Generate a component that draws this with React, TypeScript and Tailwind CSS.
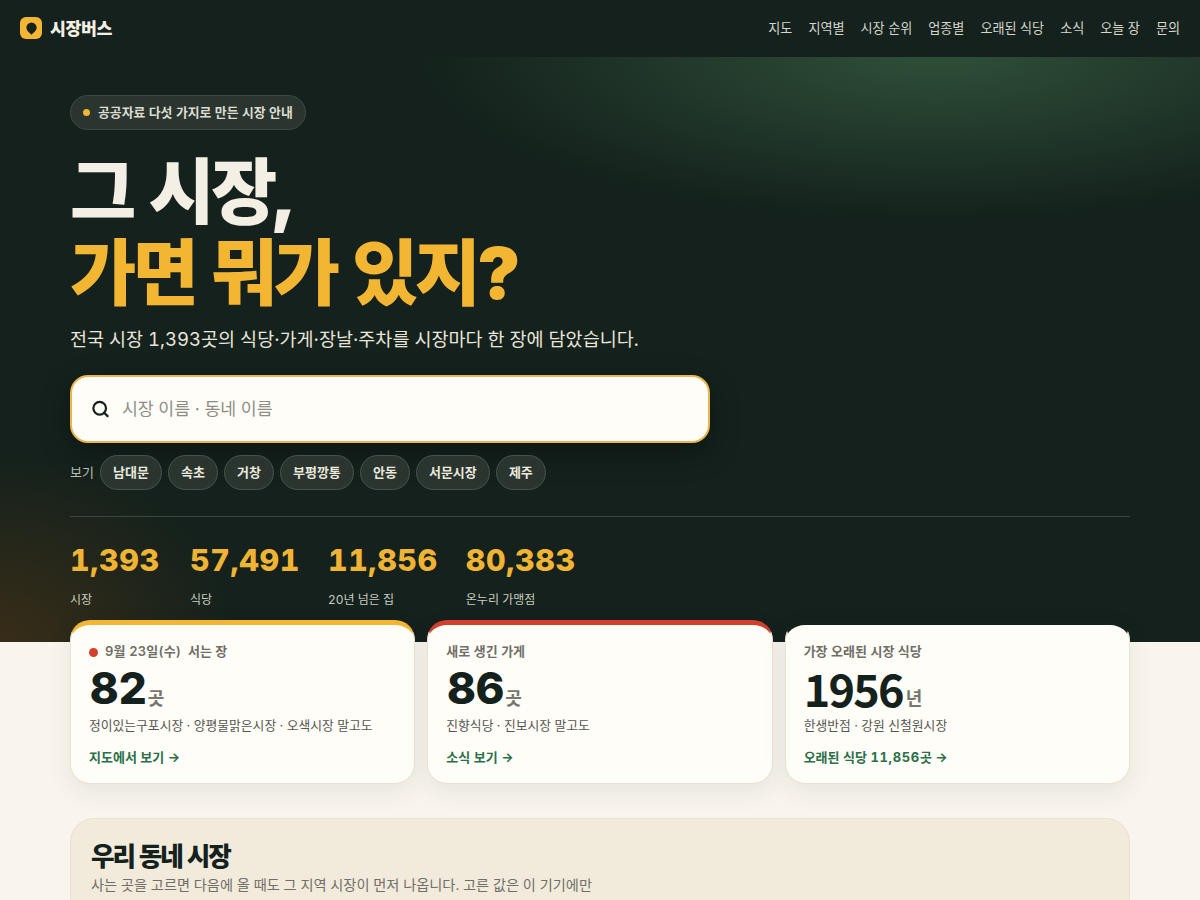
import React from 'react';
import { Search } from 'lucide-react';

const NAV = ['지도', '지역별', '시장 순위', '업종별', '오래된 식당', '소식', '오늘 장', '문의'];
const CHIPS = ['남대문', '속초', '거창', '부평깡통', '안동', '서문시장', '제주'];
const STATS = [
  { value: '1,393', label: '시장' },
  { value: '57,491', label: '식당' },
  { value: '11,856', label: '20년 넘은 집' },
  { value: '80,383', label: '온누리 가맹점' },
];

interface CardProps {
  accent: string;
  dot?: boolean;
  title: React.ReactNode;
  value: string;
  unit: string;
  note: string;
  link: React.ReactNode;
  numberClass: string;
}

function Card({ accent, dot, title, value, unit, note, link, numberClass }: CardProps) {
  return (
    <div className={`rounded-[20px] border border-t-[5px] border-[#e9e2d3] bg-[#fffdf8] px-[18px] pt-[17px] pb-[16px] shadow-[0_8px_24px_rgba(20,33,28,0.08)] ${accent}`}>
      <div className="flex h-[20px] items-center gap-[7px] text-[13px] font-semibold text-[#6f6f68]">
        {dot && <span className="h-[9px] w-[9px] rounded-full bg-[#d23f2c]" />}
        {title}
      </div>
      <div className="mt-[1px] flex h-[50px] items-end">
        <span className={`leading-[50px] text-[#14211c] ${numberClass}`}>{value}</span>
        <span className="mb-[1px] ml-[2px] text-[18px] leading-[26px] font-semibold text-[#77776f]">{unit}</span>
      </div>
      <p className="mt-[3px] text-[12.800px] leading-[20px] text-[#55554f]">{note}</p>
      <a className="mt-[11px] block text-[13px] leading-[20px] font-bold text-[#2a7049]">{link} →</a>
    </div>
  );
}

export default function App() {
  return (
    <div className="h-[900px] overflow-hidden bg-[#f9f5ee] font-['Inter','Noto_Sans_CJK_KR',sans-serif] tabular-nums">
      <div className="h-[642px] bg-[#14211c] bg-[radial-gradient(ellipse_520px_170px_at_78%_8%,#2f5039_0%,rgba(47,80,57,0)_100%),radial-gradient(ellipse_240px_190px_at_0%_100%,#382d18_0%,rgba(56,45,24,0)_100%)]">
        <header className="flex h-[57px] items-center justify-between bg-[#14211c] px-[20px]">
          <div className="flex items-center gap-[8px]">
            <span className="flex h-[22px] w-[22px] items-center justify-center rounded-[6px] bg-[#f2b632]">
              <svg viewBox="0 0 24 24" className="h-[13px] w-[13px]">
                <path d="M12 1a9.500 9.500 0 0 0-9.500 9.500C2.500 16 9 20 12 23.500c3-3.500 9.500-7.500 9.500-13A9.500 9.500 0 0 0 12 1z" fill="#14211c" />
              </svg>
            </span>
            <span className="text-[17.280px] font-extrabold tracking-[-0.02em] text-[#f4efe4]">시장버스</span>
          </div>
          <nav className="flex gap-[16px] text-[13.100px] text-[#d5d6cc]">
            {NAV.map((item) => (
              <a key={item}>{item}</a>
            ))}
          </nav>
        </header>

        <section className="mx-auto w-[1060px] pt-[38px]">
          <div className="inline-flex h-[35px] items-center gap-[8px] rounded-full border border-[#3d4a44] bg-[#2a3530] px-[12px] text-[12.870px] font-semibold text-[#dcdcd0]">
            <span className="h-[7px] w-[7px] rounded-full bg-[#f2b632]" />
            공공자료 다섯 가지로 만든 시장 안내
          </div>
          <h1 className="mt-[21px] text-[72px] leading-[81px] font-black tracking-[-0.05em] text-[#f4efe4]">
            그 시장,
            <br />
            <span className="text-[#f2b632]">가면 뭐가 있지?</span>
          </h1>
          <p className="mt-[11px] text-[18.520px] leading-[30px] text-[#e9e5da]">
            전국 시장 1,393곳의 식당·가게·장날·주차를 시장마다 한 장에 담았습니다.
          </p>
          <div className="mt-[21px] flex h-[68px] w-[640px] items-center gap-[12px] rounded-[18px] border-2 border-[#e8b64a] bg-[#fffdf8] px-[19px] shadow-[0_10px_30px_rgba(0,0,0,0.3)]">
            <Search className="h-[20px] w-[20px] text-[#14211c]" strokeWidth={2.8} />
            <input
              className="w-full bg-transparent text-[17.280px] outline-none placeholder:text-[#8d8d86]"
              placeholder="시장 이름 · 동네 이름"
            />
          </div>
          <div className="mt-[12px] flex items-center gap-[6px]">
            <span className="text-[13px] text-[#b9bcb1]">보기</span>
            {CHIPS.map((chip) => (
              <span
                key={chip}
                className="flex h-[35px] items-center rounded-full border border-[#47534d] bg-[#2a3530] px-[12.050px] text-[13px] font-semibold text-[#ebe8dc]"
              >
                {chip}
              </span>
            ))}
          </div>
          <div className="mt-[26px] flex gap-[28px] border-t border-[#3a4640] pt-[24px]">
            {STATS.map((stat) => (
              <div key={stat.label} className="min-w-[92px]">
                <div className="text-[30.400px] leading-[38px] font-extrabold tracking-[0.02em] text-[#f0b434]">{stat.value}</div>
                <div className="mt-[12px] text-[12px] leading-[18px] text-[#c9ccc1]">{stat.label}</div>
              </div>
            ))}
          </div>
        </section>
      </div>

      <main className="mx-auto -mt-[22px] w-[1060px]">
        <div className="grid grid-cols-3 gap-[12px]">
          <Card
            accent="border-t-[#f2b632]"
            dot
            title={<span><span className="tracking-[0.01em]">9월 23일(수)</span>&nbsp; 서는 장</span>}
            value="82"
            unit="곳"
            note="정이있는구포시장 · 양평물맑은시장 · 오색시장 말고도"
            link="지도에서 보기"
            numberClass="ml-[1px] -mr-[1px] text-[44px] font-extrabold"
          />
          <Card
            accent="border-t-[#d23f2c]"
            title="새로 생긴 가게"
            value="86"
            unit="곳"
            note="진향식당 · 진보시장 말고도"
            link="소식 보기"
            numberClass="ml-[1px] -mr-[1px] text-[44px] font-extrabold"
          />
          <Card
            accent="border-t-[#14211c]"
            title="가장 오래된 시장 식당"
            value="1956"
            unit="년"
            note="한생반점 · 강원 신철원시장"
            link={<span>오래된 식당 <span className="tracking-[0.05em]">11,856</span>곳</span>}
            numberClass="mr-[1px] text-[45px] font-bold tracking-[-0.04em] font-['Noto_Sans_CJK_KR']"
          />
        </div>

        <section className="mt-[34px] rounded-[24px] border border-[#e9e2d3] bg-[#f2eadb] px-[20px] pt-[21px] pb-[24px]">
          <h2 className="text-[25.600px] leading-[34px] font-black tracking-[-0.08em] text-[#14211c]">우리 동네 시장</h2>
          <p className="text-[14.200px] leading-[22px] text-[#6f6f68]">
            사는 곳을 고르면 다음에 올 때도 그 지역 시장이 먼저 나옵니다. 고른 값은 이 기기에만
          </p>
        </section>
      </main>
    </div>
  );
}
